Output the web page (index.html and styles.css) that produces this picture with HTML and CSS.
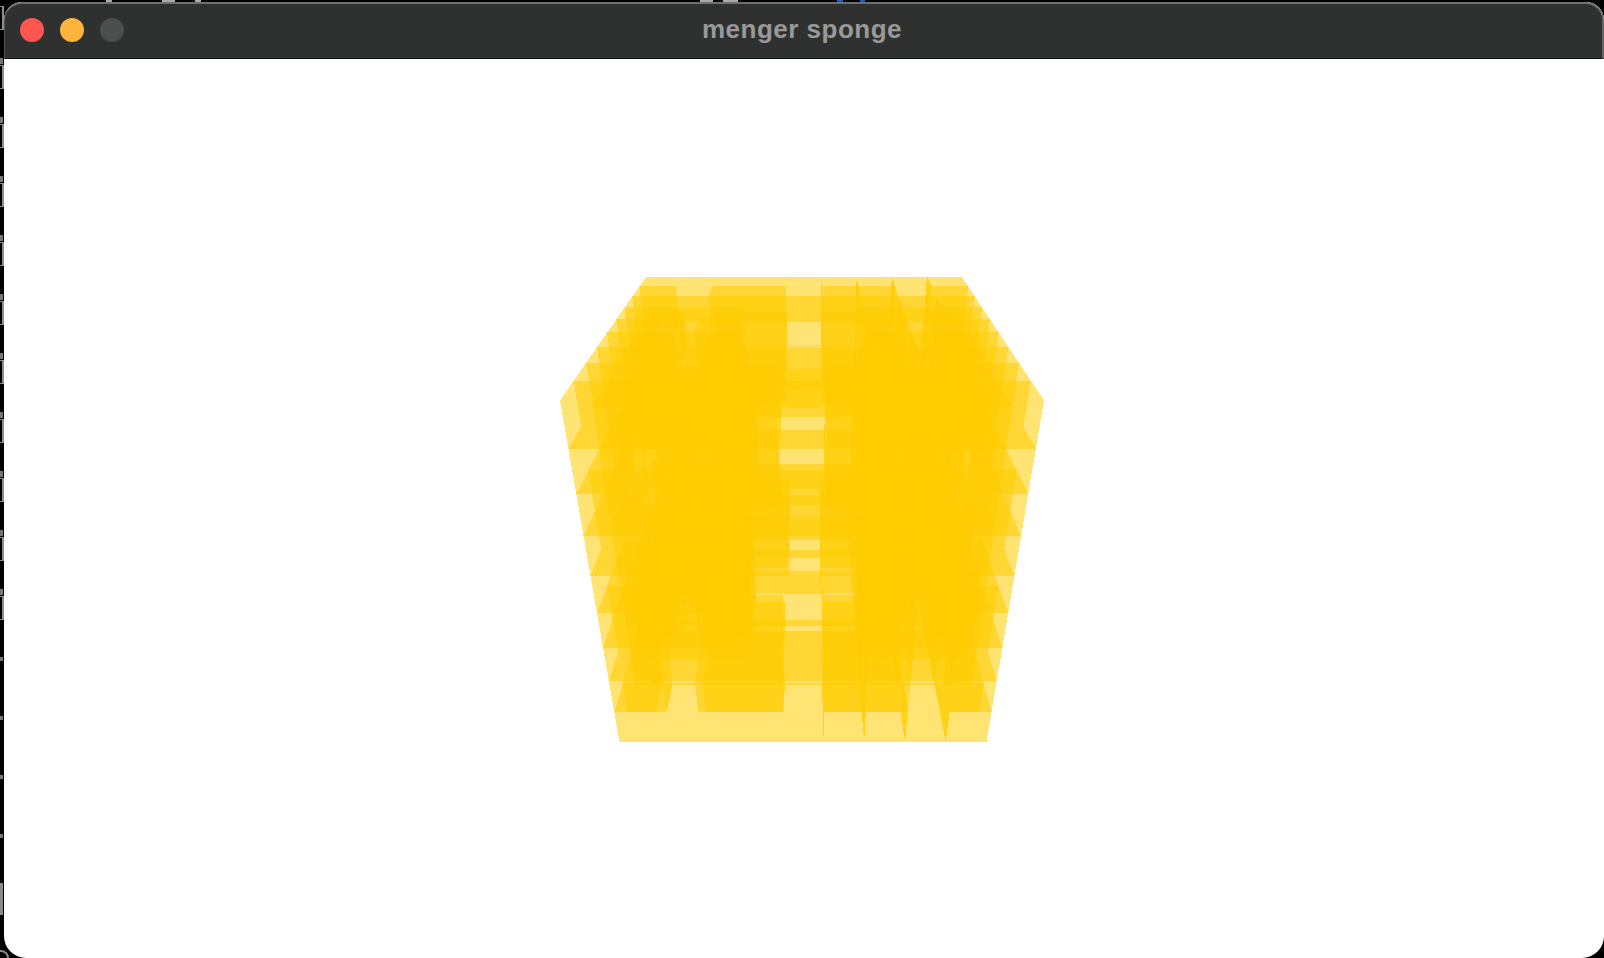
FILE: index.html
```html
<!DOCTYPE html>
<html lang="en">
<head>
    <meta charset="UTF-8">
    <title>menger sponge</title>
    <link rel="stylesheet" href="styles.css">
</head>
<body>
    <div class="top-scraps">
        <i class="scrap s1"></i><i class="scrap s2"></i><i class="scrap s3"></i><i class="scrap s4"></i><i class="scrap s5"></i><i class="scrap s6 blue"></i><i class="scrap s7 blue"></i>
    </div>
    <div class="desktop">
        <div class="left-scraps">
            <i class="box"></i><i class="tick"></i><i class="box"></i><i class="tick"></i><i class="box"></i><i class="tick"></i>
            <i class="box"></i><i class="tick"></i><i class="box"></i><i class="tick"></i><i class="box"></i><i class="tick"></i>
            <i class="box"></i><i class="tick"></i><i class="box"></i><i class="tick"></i><i class="box"></i><i class="tick"></i>
            <i class="box"></i><i class="tick"></i><i class="box"></i>
            <i class="tick wide"></i><i class="tick wide"></i><i class="tick wide"></i><i class="tick wide"></i>
            <i class="bar"></i>
        </div>
        <div class="corner-scrap"></div>
        <div class="window">
            <div class="titlebar">
                <div class="lights">
                    <span class="light red"></span>
                    <span class="light yellow"></span>
                    <span class="light off"></span>
                </div>
                <div class="title">menger sponge</div>
            </div>
            <div class="canvas">
                <canvas id="sponge" class="sponge" width="505" height="480"></canvas>
            </div>
        </div>
    </div>
    <script src="sponge.js"></script>
</body>
</html>
```

FILE: styles.css
```css
body {
    margin: 0;
    height: 958px;
    overflow: hidden;
    background: #000;
    font-family: "Liberation Sans", Arial, sans-serif;
}

.top-scraps {
    position: relative;
    height: 2px;
}
.scrap {
    position: absolute;
    top: 0;
    height: 2px;
    background: #aaa;
}
.scrap.blue { background: #1560c0; }
.s1 { left: 106px; width: 6px; }
.s2 { left: 162px; width: 13px; }
.s3 { left: 195px; width: 6px; }
.s4 { left: 700px; width: 13px; }
.s5 { left: 723px; width: 15px; }
.s6 { left: 837px; width: 6px; }
.s7 { left: 860px; width: 5px; }

.desktop {
    display: flex;
    height: 956px;
}

.left-scraps {
    width: 4px;
    padding-top: 4px;
    display: flex;
    flex-direction: column;
    flex: none;
}
.box {
    display: block;
    box-sizing: border-box;
    width: 4px;
    height: 24px;
    border: 1px solid #8e8e8e;
    border-left: none;
    border-right-width: 2px;
    flex: none;
}
.tick {
    display: block;
    width: 3px;
    height: 6px;
    margin: 28px 0 1px;
    background: #777;
    flex: none;
}
.tick.wide {
    height: 4px;
    margin: 55px 0 0;
}
.box + .tick.wide { margin-top: 37px; }
.bar {
    display: block;
    width: 3px;
    height: 32px;
    margin-top: 45px;
    background: #8a8a8a;
    flex: none;
}
.corner-scrap {
    position: absolute;
    left: -7px;
    top: 950px;
    width: 12px;
    height: 12px;
    border: 2px solid #888;
    border-radius: 50%;
}

.window {
    position: relative;
    flex: 1;
    display: flex;
    flex-direction: column;
    border-radius: 18px 18px 22px 22px;
    overflow: hidden;
    background: #fff;
}

.titlebar {
    display: grid;
    grid-template-columns: 1fr auto 1fr;
    align-items: center;
    box-sizing: border-box;
    height: 57px;
    padding: 0 18px 2px 15px;
    background: #2f3130;
    border-top: 2px solid #6f6f6f;
    border-left: 1px solid #555;
    border-right: 2px solid #666;
    border-bottom: 1px solid #111;
    border-radius: 18px 18px 0 0;
}

.lights {
    display: flex;
    gap: 16px;
}
.light {
    width: 24px;
    height: 24px;
    border-radius: 50%;
}
.red { background: #ff5652; }
.yellow { background: #feb53d; }
.off { background: #4d4f4e; }

.title {
    padding-bottom: 2px;
    color: #999;
    font-size: 26px;
    font-weight: bold;
    letter-spacing: 0.5px;
    white-space: nowrap;
}

.canvas {
    flex: 1;
    padding: 211px 0 0 546px;
}
.sponge { display: block; }
```

FILE: sponge.js
```js
// Level 2 menger sponge, drawn like a GL window with depth test on and alpha blending:
// a fragment only counts if it is nearer than what was drawn before it.
var canvas = document.getElementById("sponge");
var W = canvas.width, H = canvas.height;
var depth = new Float64Array(W * H).fill(-1);
var layers = new Uint8Array(W * H);

var FACES = [
    [[0,0,1],[1,0,1],[1,1,1],[0,1,1]], // front
    [[0,1,1],[1,1,1],[1,1,0],[0,1,0]], // top
    [[1,0,0],[0,0,0],[0,1,0],[1,1,0]], // back
    [[0,0,0],[1,0,0],[1,0,1],[0,0,1]], // bottom
    [[0,0,0],[0,0,1],[0,1,1],[0,1,0]], // left
    [[1,0,1],[1,0,0],[1,1,0],[1,1,1]]  // right
];

// camera, fitted to the corners of the cube on screen
function project(x, y, z) {
    var w = 1 - 0.1118 * y - 0.1865 * z;
    var skew = 0.5 * (1 - y) + (1 - z);
    return [252 + skew + 169.8 * x / w, (-202.8 * y - 8.35 * z + 492.15) / w - 270, 1 / w];
}

function isHole(x, y, z) {
    for (var n = 3; n > 0; n = Math.floor(n / 3)) {
        var c = 0;
        if (Math.floor(x / n) % 3 == 1) c++;
        if (Math.floor(y / n) % 3 == 1) c++;
        if (Math.floor(z / n) % 3 == 1) c++;
        if (c >= 2) return true;
    }
    return false;
}

function triangle(a, b, c) {
    var minX = Math.max(0, Math.floor(Math.min(a[0], b[0], c[0])));
    var maxX = Math.min(W - 1, Math.ceil(Math.max(a[0], b[0], c[0])));
    var minY = Math.max(0, Math.floor(Math.min(a[1], b[1], c[1])));
    var maxY = Math.min(H - 1, Math.ceil(Math.max(a[1], b[1], c[1])));
    var den = (b[1] - c[1]) * (a[0] - c[0]) + (c[0] - b[0]) * (a[1] - c[1]);
    if (Math.abs(den) < 1e-9) return;
    for (var y = minY; y <= maxY; y++) {
        for (var x = minX; x <= maxX; x++) {
            var px = x + 0.5, py = y + 0.5;
            var l1 = ((b[1] - c[1]) * (px - c[0]) + (c[0] - b[0]) * (py - c[1])) / den;
            var l2 = ((c[1] - a[1]) * (px - c[0]) + (a[0] - c[0]) * (py - c[1])) / den;
            var l3 = 1 - l1 - l2;
            if (l1 < 0 || l2 < 0 || l3 < 0) continue;
            var d = l1 * a[2] + l2 * b[2] + l3 * c[2];
            var i = y * W + x;
            if (d > depth[i] + 1e-7) {
                depth[i] = d;
                layers[i]++;
            }
        }
    }
}

function drawCube(cx, cy, cz) {
    var s = 2 / 9;
    FACES.forEach(function (face) {
        var q = face.map(function (v) {
            return project(-1 + (cx + v[0]) * s, -1 + (cy + v[1]) * s, -1 + (cz + v[2]) * s);
        });
        triangle(q[0], q[1], q[2]);
        triangle(q[0], q[2], q[3]);
    });
}

for (var cy = 0; cy < 9; cy++) {
    for (var cz = 0; cz < 9; cz++) {
        for (var cx = 8; cx >= 0; cx--) {
            if (!isHole(cx, cy, cz)) drawCube(cx, cy, cz);
        }
    }
}

// #ffcc00 at 55% over white, once per layer
var ctx = canvas.getContext("2d");
var img = ctx.createImageData(W, H);
for (var i = 0; i < W * H; i++) {
    var t = Math.pow(0.45, layers[i]);
    img.data[i * 4] = 255;
    img.data[i * 4 + 1] = 204 + 51 * t;
    img.data[i * 4 + 2] = 255 * t;
    img.data[i * 4 + 3] = 255;
}
ctx.putImageData(img, 0, 0);
```
